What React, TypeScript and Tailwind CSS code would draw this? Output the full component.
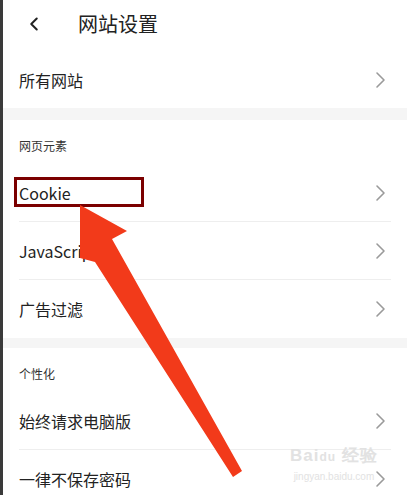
import { ChevronLeft } from 'lucide-react'

const font = { fontFamily: '"Noto Sans CJK SC", "Noto Sans", sans-serif' }

function Chevron() {
  return (
    <svg width="11" height="18" viewBox="0 0 11 18" fill="none" className="shrink-0">
      <path d="M2 2 L9 9 L2 16" stroke="#9a9a9a" strokeWidth="1.6" strokeLinecap="round" strokeLinejoin="round" />
    </svg>
  )
}

function Row({ label, divider = false }: { label: string; divider?: boolean }) {
  return (
    <div className="px-[16px] shrink-0">
      <div className={`h-[58px] flex items-center justify-between ${divider ? 'border-b border-[#eeeeee]' : ''}`}>
        <span className="text-[16px] text-[#222]">{label}</span>
        <div className="pr-[5px]"><Chevron /></div>
      </div>
    </div>
  )
}

function Section({ title }: { title: string }) {
  return (
    <div className="h-[44px] px-[16px] pt-[18px] shrink-0">
      <span className="text-[12px] leading-[16px] text-[#333] block">{title}</span>
    </div>
  )
}

export default function App() {
  return (
    <div className="relative w-[407px] h-[495px] overflow-hidden bg-white flex" style={font}>
      <div className="w-[3px] bg-[#3a3a3a] shrink-0" />
      <div className="flex-1 flex flex-col">
        <div className="h-[48px] shrink-0 flex items-center pl-[20px]">
          <ChevronLeft size={22} strokeWidth={2.2} color="#222" />
          <span className="ml-[33px] text-[20px] text-[#222]">网站设置</span>
        </div>
        <div className="h-[60px] shrink-0 pt-[4px] px-[16px] flex items-center justify-between">
          <span className="text-[16px] text-[#222]">所有网站</span>
          <div className="pr-[5px]"><Chevron /></div>
        </div>
        <div className="h-[12px] shrink-0 bg-[#f5f5f5]" />
        <Section title="网页元素" />
        <Row label="Cookie" divider />
        <Row label="JavaScript" divider />
        <Row label="广告过滤" />
        <div className="h-[10px] shrink-0 bg-[#f5f5f5]" />
        <Section title="个性化" />
        <Row label="始终请求电脑版" divider />
        <Row label="一律不保存密码" />
      </div>

      {/* annotation box */}
      <div className="absolute left-[14px] top-[177px] w-[130px] h-[30px] border-[3px] border-[#7b0000]" />

      {/* watermark */}
      <div className="absolute left-[290px] top-[446px] flex flex-col items-center text-[#e2e2e2] pointer-events-none" style={{ fontFamily: '"Liberation Sans", sans-serif' }}>
        <span className="text-[17px] font-bold leading-[20px] tracking-[1px]">Bai<span className="text-[12px]">du</span> 经验</span>
        <span className="text-[10px] leading-[12px] mt-[4px]">jingyan.baidu.com</span>
      </div>

      {/* annotation arrow */}
      <svg className="absolute left-0 top-0 pointer-events-none" width="407" height="495" viewBox="0 0 407 495">
        <polygon points="80,205 127,231 112,239 242,471 233,477 95,262 80,258" fill="#f23a1a" />
      </svg>
    </div>
  )
}
